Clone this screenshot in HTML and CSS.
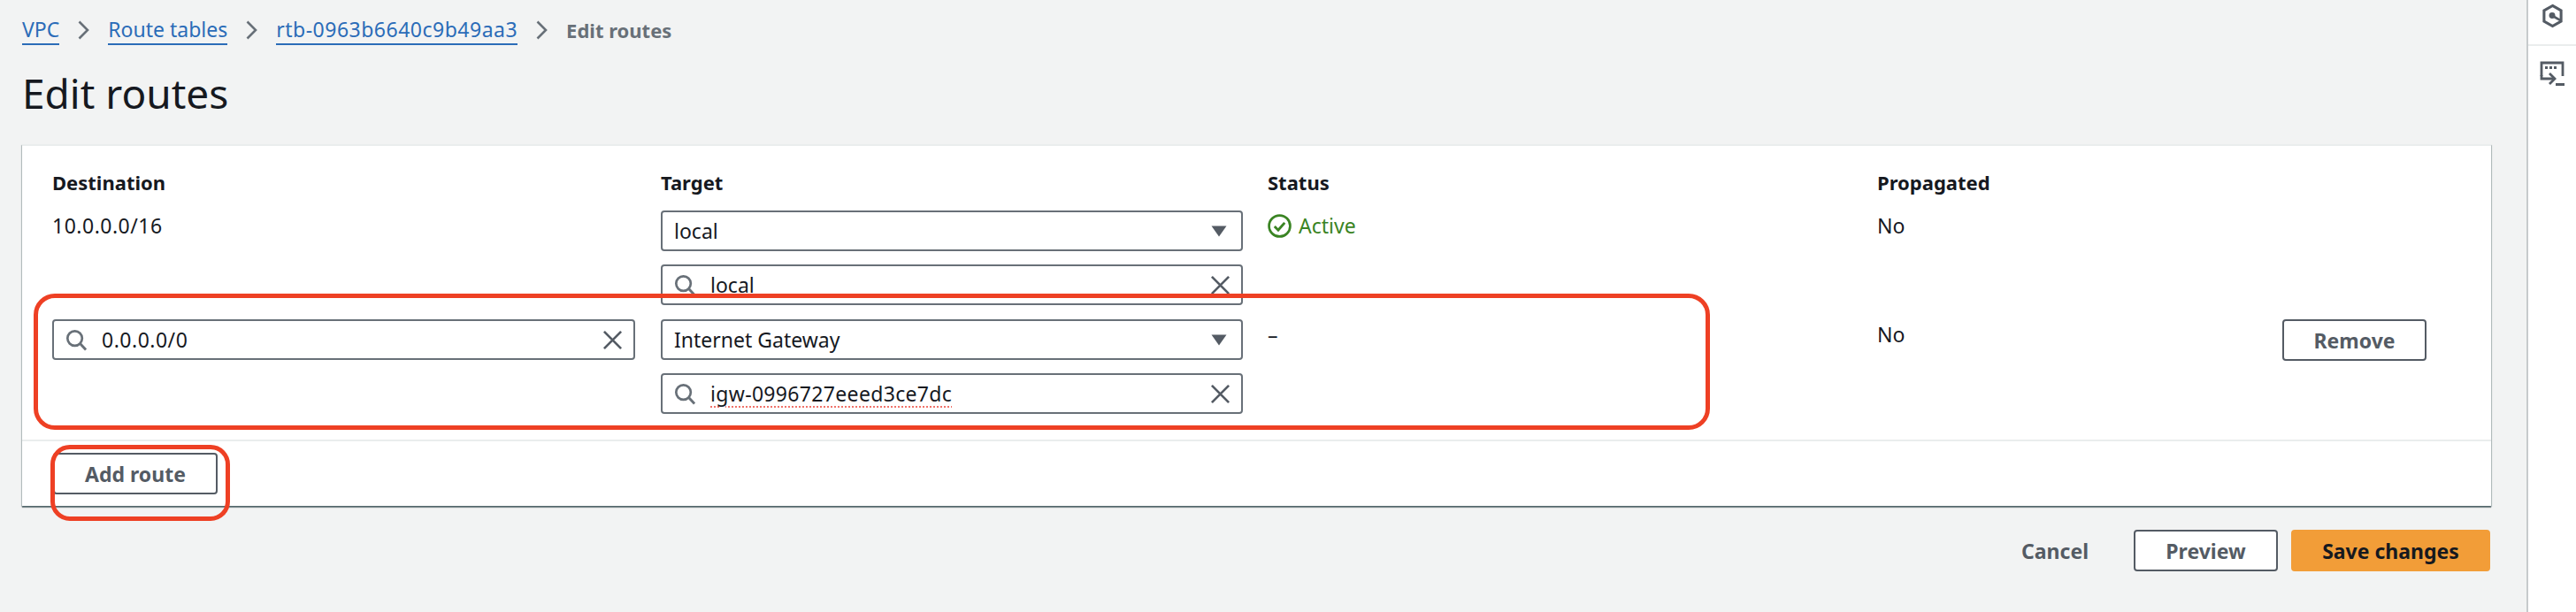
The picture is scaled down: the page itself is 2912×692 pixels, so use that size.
FILE: index.html
```html
<!DOCTYPE html>
<html lang="en">

<head>
    <meta charset="UTF-8">
    <meta name="viewport" content="width=device-width, initial-scale=1.0">
    <title>Edit routes</title>
    <link rel="stylesheet" href="styles.css">
</head>

<body>
    <svg class="icon-defs" width="0" height="0">
        <symbol id="i-search" viewBox="0 0 26 26">
            <circle cx="11" cy="11" r="8.6" fill="none" stroke="currentColor" stroke-width="2.8" />
            <path d="M17 17l7 7.5" fill="none" stroke="currentColor" stroke-width="3" />
        </symbol>
        <symbol id="i-clear" viewBox="0 0 24 24">
            <path d="M2 2l20 20M22 2L2 22" fill="none" stroke="currentColor" stroke-width="2.8" />
        </symbol>
        <symbol id="i-caret" viewBox="0 0 18 13">
            <path d="M0.5 0.5h17L9 12.5z" fill="currentColor" />
        </symbol>
        <symbol id="i-chevron" viewBox="0 0 13 22">
            <path d="M1.500 1.500l9.500 9.500-9.500 9.500" fill="none" stroke="currentColor" stroke-width="2.6" />
        </symbol>
    </svg>

    <div class="shell">
        <main class="main">
            <nav class="crumbs">
                <a class="crumb" href="#">VPC</a>
                <svg class="chevron"><use href="#i-chevron" /></svg>
                <a class="crumb" href="#">Route tables</a>
                <svg class="chevron"><use href="#i-chevron" /></svg>
                <a class="crumb num" href="#">rtb-0963b6640c9b49aa3</a>
                <svg class="chevron"><use href="#i-chevron" /></svg>
                <span class="crumb-current">Edit routes</span>
            </nav>

            <h1 class="page-title">Edit routes</h1>

            <section class="card">
                <div class="routes">
                    <div class="col-head">Destination</div>
                    <div class="col-head">Target</div>
                    <div class="col-head">Status</div>
                    <div class="col-head">Propagated</div>
                    <div></div>

                    <div class="cell num">10.0.0.0/16</div>
                    <div class="stack">
                        <div class="field">
                            <span class="field-text">local</span>
                            <svg class="caret"><use href="#i-caret" /></svg>
                        </div>
                        <div class="field">
                            <svg class="search"><use href="#i-search" /></svg>
                            <span class="field-text">local</span>
                            <svg class="clear"><use href="#i-clear" /></svg>
                        </div>
                    </div>
                    <div class="cell status-ok">
                        <svg class="status-icon" viewBox="0 0 26 26">
                            <circle cx="13" cy="13" r="11.5" fill="none" stroke="currentColor" stroke-width="2.6" />
                            <path d="M7.5 13.5l4 4 7-8" fill="none" stroke="currentColor" stroke-width="2.8" />
                        </svg>
                        Active
                    </div>
                    <div class="cell">No</div>
                    <div></div>

                    <div class="field field-dest">
                        <svg class="search"><use href="#i-search" /></svg>
                        <span class="field-text num">0.0.0.0/0</span>
                        <svg class="clear"><use href="#i-clear" /></svg>
                    </div>
                    <div class="stack">
                        <div class="field">
                            <span class="field-text">Internet Gateway</span>
                            <svg class="caret"><use href="#i-caret" /></svg>
                        </div>
                        <div class="field">
                            <svg class="search"><use href="#i-search" /></svg>
                            <span class="field-text spell">igw-0996727eeed3ce7dc</span>
                            <svg class="clear"><use href="#i-clear" /></svg>
                        </div>
                    </div>
                    <div class="cell">–</div>
                    <div class="cell">No</div>
                    <div><button class="btn btn-remove">Remove</button></div>
                </div>

                <div class="card-foot">
                    <button class="btn btn-add">Add route</button>
                </div>
            </section>

            <div class="actions">
                <button class="btn-link">Cancel</button>
                <button class="btn btn-preview">Preview</button>
                <button class="btn btn-save">Save changes</button>
            </div>
        </main>

        <aside class="side">
            <div class="side-top">
                <svg class="side-icon-a" viewBox="0 0 26 28">
                    <path d="M13 2l10 5.7v12.6L13 26 3 20.300V7.700z" fill="none" stroke="currentColor" stroke-width="3.200" />
                    <circle cx="12.500" cy="13.500" r="3.600" fill="currentColor" />
                    <path d="M13 14l9 5" fill="none" stroke="currentColor" stroke-width="2.800" />
                </svg>
            </div>
            <div class="side-bottom">
                <svg class="side-icon-b" viewBox="0 0 28 28">
                    <path d="M2 17V2h24v15" fill="none" stroke="currentColor" stroke-width="2.800" />
                    <path d="M2 16v4h13" fill="none" stroke="currentColor" stroke-width="2.800" />
                    <path d="M11 14l6 6-6 6" fill="none" stroke="currentColor" stroke-width="2.800" />
                    <rect x="6" y="6" width="3" height="3" fill="currentColor" />
                    <rect x="11" y="6" width="3" height="3" fill="currentColor" />
                    <rect x="16" y="6" width="3" height="3" fill="currentColor" />
                    <rect x="18" y="25" width="10" height="3" fill="currentColor" />
                </svg>
            </div>
        </aside>

        <!-- red annotations drawn over the screenshot -->
        <div class="mark mark-row"></div>
        <div class="mark mark-add"></div>
    </div>
</body>

</html>
```

FILE: styles.css
```css
* {
    box-sizing: border-box;
}

body {
    margin: 0;
    background: #f2f3f3;
    color: #16191f;
    font-family: "Noto Sans", "Open Sans", sans-serif;
    font-size: 23px;
    line-height: 32px;
}

.icon-defs {
    position: absolute;
}

.shell {
    position: relative;
    display: flex;
    height: 692px;
    overflow: hidden;
}

.main {
    flex: 1;
    min-width: 0;
    padding: 18px 40px 0 25px;
}

/* ids and addresses sit a little wider than the words */
.num {
    letter-spacing: 0.5px;
}

/* breadcrumbs */
.crumbs {
    display: flex;
    align-items: center;
    height: 32px;
}

.crumb {
    color: #2b6cb8;
    text-decoration: none;
    border-bottom: 2px solid #2b6cb8;
    line-height: 31px;
}

.crumb-current {
    color: #687078;
    font-weight: 700;
    font-size: 22px;
}

.chevron {
    width: 13px;
    height: 22px;
    margin: 0 21px;
    color: #687078;
}

.page-title {
    margin: 23px 0 0;
    font-size: 46px;
    font-weight: 400;
    line-height: 64px;
}

/* routes card */
.card {
    margin-top: 26px;
    background: #fff;
    border-top: 2px solid #eaeded;
    box-shadow: 0 2px 1px rgba(0, 28, 36, 0.45), 1px 1px 1px rgba(0, 28, 36, 0.2), -1px 1px 1px rgba(0, 28, 36, 0.2);
}

.routes {
    display: grid;
    grid-template-columns: 660px 658px 661px 430px 163px;
    column-gap: 28px;
    row-gap: 16px;
    padding: 25px 0 29px 34px;
}

.col-head {
    font-size: 22px;
    font-weight: 700;
}

.cell {
    padding-top: 1px;
}

.stack {
    display: flex;
    flex-direction: column;
    gap: 15px;
}

.field {
    display: flex;
    align-items: center;
    height: 46px;
    padding: 0 12px 0 13px;
    background: #fff;
    border: 2px solid #687078;
    border-radius: 4px;
}

.field-dest {
    margin-right: 1px;
}

.field-text {
    flex: 1;
    white-space: nowrap;
}

.spell {
    flex: none;
    margin-right: auto;
    letter-spacing: 0.33px;
    text-decoration: underline dotted #f0736a 2px;
    text-underline-offset: 5px;
}

.search {
    width: 25px;
    height: 25px;
    margin-right: 16px;
    color: #687078;
}

.clear {
    width: 23px;
    height: 23px;
    color: #545b64;
}

.caret {
    width: 18px;
    height: 13px;
    margin-right: 4px;
    color: #545b64;
}

.status-ok {
    display: flex;
    align-items: flex-start;
    gap: 8px;
    color: #3a8423;
}

.status-icon {
    width: 27px;
    height: 27px;
    margin-top: 3px;
}

/* buttons */
.btn {
    height: 47px;
    padding: 0;
    font: 700 23px/32px "Noto Sans", "Open Sans", sans-serif;
    color: #545b64;
    background: #fff;
    border: 2px solid #545b64;
    border-radius: 4px;
}

.btn-remove {
    width: 163px;
}

.card-foot {
    padding: 13px 0 13px 35px;
    border-top: 2px solid #eaeded;
}

.btn-add {
    display: block;
    width: 186px;
}

.actions {
    display: flex;
    justify-content: flex-end;
    align-items: center;
    gap: 15px;
    margin-top: 27px;
    padding-right: 1px;
}

.btn-link {
    margin-right: 36px;
    padding: 0;
    font: 700 23px/32px "Noto Sans", "Open Sans", sans-serif;
    color: #545b64;
    background: none;
    border: 0;
}

.btn-preview {
    width: 163px;
}

.btn-save {
    width: 225px;
    color: #16191f;
    background: #f29d38;
    border-color: #f29d38;
}

/* right hand rail */
.side {
    width: 56px;
    flex: none;
    color: #545b64;
    background: #fff;
    border-left: 2px solid #c6cacc;
}

.side-top {
    display: flex;
    justify-content: center;
    align-items: center;
    height: 52px;
    padding-bottom: 14px;
    border-bottom: 2px solid #eaeded;
}

.side-bottom {
    display: flex;
    justify-content: center;
    padding-top: 17px;
}

.side-icon-a {
    width: 25px;
    height: 28px;
}

.side-icon-b {
    width: 28px;
    height: 28px;
}

/* annotations */
.mark {
    position: absolute;
    border: 5px solid #ee4024;
    pointer-events: none;
}

.mark-row {
    left: 38px;
    top: 332px;
    width: 1895px;
    height: 154px;
    border-radius: 24px;
}

.mark-add {
    left: 57px;
    top: 503px;
    width: 203px;
    height: 86px;
    border-radius: 22px;
}
```
